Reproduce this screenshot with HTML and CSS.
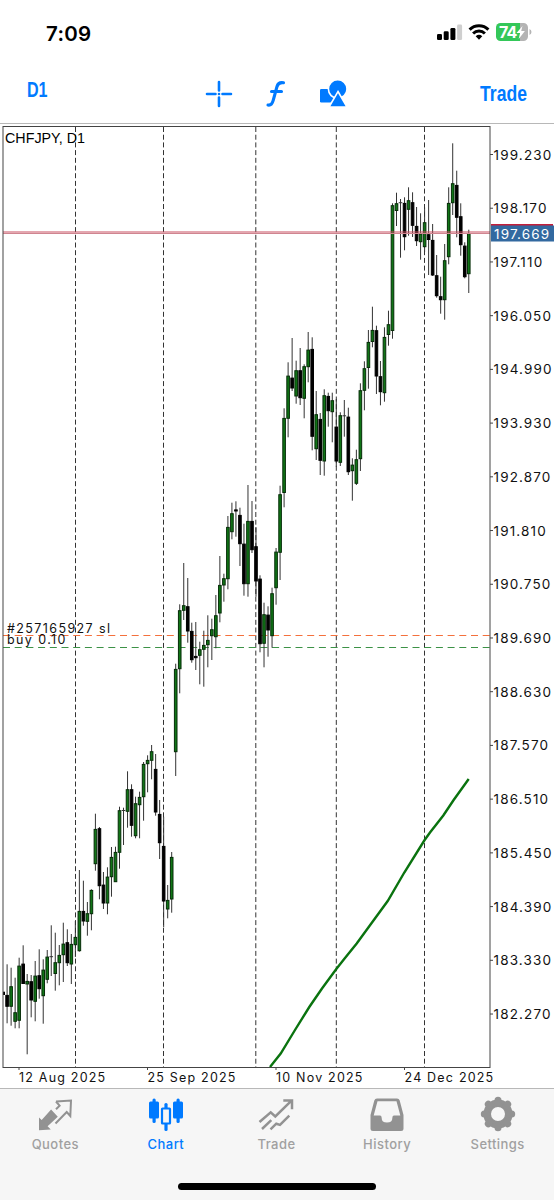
FILE: index.html
```html
<!DOCTYPE html>
<html lang="en">
<head>
  <meta charset="UTF-8" />
  <meta name="viewport" content="width=device-width, initial-scale=1.0" />
  <title>CHFJPY, D1</title>
  <link rel="stylesheet" href="styles.css">
</head>
<body>
  <div class="app">
    <header class="header">
      <div class="status">
        <span class="time">7:09</span>
        <svg class="status-icons" width="98" height="20" viewBox="0 0 98 20">
          <rect x="0" y="11" width="5" height="6" rx="1.3" />
          <rect x="6.7" y="8.3" width="5" height="8.7" rx="1.3" />
          <rect x="13.4" y="5" width="5" height="12" rx="1.3" />
          <rect x="20.1" y="1.6" width="5" height="15.4" rx="1.3" fill="#cfcfcf" />
          <g fill="none" stroke="#000" stroke-width="3">
            <path d="M32.6 6.6a13.3 13.3 0 0 1 18.8 0" />
            <path d="M36.1 10.5a8.4 8.4 0 0 1 11.8 0" />
          </g>
          <path d="M38.7 13.2a5 5 0 0 1 6.6 0L42 16.8z" />
          <path d="M63.5 0H83v18H63.500a4.500 4.500 0 0 1-4.500-4.500v-9A4.500 4.500 0 0 1 63.500 0z" fill="#34c759" />
          <path d="M83 0h3.500A4.500 4.500 0 0 1 91 4.500v9a4.500 4.500 0 0 1-4.500 4.500H83z" fill="#b4b4b4" />
          <path d="M92.500 6v6q2-1 2-3t-2-3z" fill="#b4b4b4" />
          <text class="battery" x="62" y="14.700">74</text>
          <path d="M85.500 3L79.500 10h3.600l-1.400 6 6.200-8h-3.700z" fill="#fff" />
        </svg>
      </div>
      <nav class="toolbar">
        <span class="period">D1</span>
        <div class="tools">
          <svg width="28" height="28" viewBox="0 0 28 28" stroke="#007aff" stroke-width="2.600" stroke-linecap="round">
            <path d="M14 2v8.500M14 17.500V26M2 14h8.500M17.500 14H26" /><circle cx="14" cy="14" r="1.300" fill="#007aff" stroke="none" />
          </svg>
          <svg width="20" height="28" viewBox="0 0 20 28" fill="none" stroke="#007aff" stroke-width="3.100" stroke-linecap="round">
            <path d="M2 25c3.200.6 4.300-1.300 5.200-4.600L11 6.500c.9-3.200 3-4.300 6.500-3.700M5.500 11.500h10" />
          </svg>
          <svg width="28" height="28" viewBox="0 0 28 28" fill="#007aff">
            <rect x="1" y="9" width="15" height="13.500" rx="1.200" />
            <circle cx="18.700" cy="9" r="9.300" stroke="#fff" stroke-width="1.600" />
            <path d="M19 11.500L28 27H10z" stroke="#fff" stroke-width="1.600" />
          </svg>
        </div>
        <span class="trade">Trade</span>
      </nav>
    </header>

    <svg class="chart" id="chart" width="554" height="964" viewBox="0 124 554 964">
      <g id="separators" class="separator"></g>
      <path class="sl-line" d="M3 635.500H490" />
      <path class="buy-line" d="M3 647.500H490" />
      <g id="candles"></g>
      <polyline class="average" points="270,1067 280.700,1053.500 295,1030 309.300,1007 322,988.500 336.300,969 345,958 356.700,943.500 372,922.500 387.700,901 404.300,872.500 424.300,840.500 430,832.500 443.300,815.500 453.300,800.500 468.700,779" />
      <path class="ask" d="M3 232H490" />
      <path class="bid" d="M3 233.500H490" />
      <rect class="frame" x="3" y="126.500" width="487" height="941" />
      <g id="prices" class="price"></g>
      <g id="dates" class="date"></g>
      <rect x="491" y="224" width="62" height="2" fill="#c41e3a" />
      <rect x="491" y="225.500" width="63" height="16" fill="#3269a0" />
      <text class="current" x="494" y="238.700">197.669</text>
      <text class="symbol" x="5" y="143">CHFJPY, D1</text>
      <text class="order" x="7" y="632.500">#257165927 sl</text>
      <text class="order" x="7" y="644">buy 0.10</text>
    </svg>

    <footer class="tabbar">
      <div class="tabs">
        <div class="tab">
          <svg width="36" height="34" viewBox="0 0 36 34">
            <path d="M2 20.500v12.800l11.800-.8-3.200-3.200 10.200-9.600-6.700-7.300L4.700 22.900z" fill="#929292" />
            <path d="M19 4.500L34 3.500 33.300 19l-3.600-4L18.500 26.500M19 4.500l3.600 4.200-3.600 3.500" fill="none" stroke="#929292" stroke-width="2" />
          </svg>
          <span>Quotes</span>
        </div>
        <div class="tab active">
          <svg width="36" height="34" viewBox="0 0 36 34" fill="#007aff">
            <rect x="1" y="4.500" width="10" height="17" rx="1.500" /><rect x="4.500" y="1.500" width="3.200" height="24.500" rx="1.500" />
            <rect x="25" y="4.500" width="10" height="17" rx="1.500" /><rect x="28.500" y="1.500" width="3.200" height="24.500" rx="1.500" />
            <rect x="16.400" y="6" width="3.200" height="28" rx="1.500" />
            <rect x="14" y="11.500" width="8" height="15" rx=".5" fill="#f6f6f6" stroke="#007aff" stroke-width="2.200" />
          </svg>
          <span>Chart</span>
        </div>
        <div class="tab">
          <svg width="36" height="34" viewBox="0 0 36 34" fill="none" stroke="#929292" stroke-width="2.500">
            <path d="M1.500 25L12.700 15.300l4.600 4.200L33 4.200M25.300 3.500H34v8.700M4 32l9.300-8.800M12.500 32.300l5.800-5.600 3.700 1.200 9.300-9.200" />
          </svg>
          <span>Trade</span>
        </div>
        <div class="tab">
          <svg width="36" height="34" viewBox="0 0 36 34" fill="#929292" fill-rule="evenodd">
            <path d="M8 1.500h20q2 0 2.700 2L34.500 18v13.500q0 2.500-2.500 2.500H4q-2.500 0-2.500-2.500V18L5.300 3.500q.7-2 2.700-2zM8.500 4.200L4.700 18.600H11q1.600 0 1.600 1.800 0 5.200 5.400 5.200t5.400-5.200q0-1.800 1.600-1.800h6.300L27.500 4.200z" />
          </svg>
          <span>History</span>
        </div>
        <div class="tab">
          <svg width="36" height="36" viewBox="0 0 36 36" fill="none" stroke="#929292">
            <circle cx="18" cy="18" r="10.800" stroke-width="7.600" />
            <g id="teeth" stroke-width="7" stroke-linecap="round"></g>
          </svg>
          <span>Settings</span>
        </div>
      </div>
      <div class="home"></div>
    </footer>
  </div>
  <script src="chart.js"></script>
</body>
</html>
```
FILE: styles.css
```css
* {
  box-sizing: border-box;
}
body {
  margin: 0;
  background-color: #fff;
  font-family: Inter, "Liberation Sans", sans-serif;
}
.app {
  display: flex;
  flex-direction: column;
  width: 554px;
  height: 1200px;
  overflow: hidden;
}
.header {
  height: 124px;
  border-bottom: 1px solid #b8b8b8;
}
.status {
  display: flex;
  justify-content: space-between;
  align-items: center;
  height: 66px;
  padding: 0 19px 0 46px;
}
.time {
  font-size: 20.5px;
  font-weight: 600;
  letter-spacing: 0.3px;
}
.battery {
  font-size: 16px;
  font-weight: 700;
  fill: #fff;
  letter-spacing: -0.8px;
}
.toolbar {
  display: flex;
  justify-content: space-between;
  align-items: center;
  height: 56px;
  padding: 0 27px;
  color: #007aff;
  font-family: "Liberation Sans", sans-serif;
  font-size: 22px;
  font-weight: bold;
}
.period {
  width: 60px;
  padding-bottom: 8px;
  transform: scaleX(0.73);
  transform-origin: left;
}
.tools {
  display: flex;
  gap: 33px;
  margin-right: 2px;
}
.trade {
  width: 60px;
  text-align: right;
  transform: scaleX(0.8);
  transform-origin: right;
}
.chart {
  display: block;
  flex: none;
}
.frame {
  fill: none;
  stroke: #444;
}
.separator {
  stroke: #333;
  stroke-dasharray: 5 2.7;
}
.sl-line {
  stroke: #f4703c;
  stroke-dasharray: 7 4.7;
}
.buy-line {
  stroke: #3c9246;
  stroke-dasharray: 7 4.7;
}
.average {
  fill: none;
  stroke: #0a730f;
  stroke-width: 2.4;
}
.ask {
  stroke: #c94f61;
}
.bid {
  stroke: #cf8590;
}
.wick {
  stroke: #333;
}
.bull {
  fill: #107516;
  stroke: #062c08;
}
.bear {
  fill: #000;
  stroke: #000;
}
.price,
.current {
  font-size: 13.5px;
  letter-spacing: 1.15px;
  fill: #111;
}
.current {
  fill: #fff;
}
.date {
  font-size: 12.5px;
  letter-spacing: 1.2px;
  fill: #111;
}
.tick {
  stroke: #444;
}
.symbol {
  font-family: "Liberation Sans", sans-serif;
  font-size: 14.3px;
}
.order {
  font-size: 12.5px;
  letter-spacing: 1.4px;
  fill: #111;
}
.tabbar {
  height: 112px;
  border-top: 1px solid #b8b8b8;
  background-color: #f6f6f6;
}
.tabs {
  display: flex;
  width: 553px;
  height: 94px;
  padding-top: 7px;
}
.tab {
  display: flex;
  flex: 1;
  flex-direction: column;
  align-items: center;
  color: #a0a0a0;
  font-size: 13px;
  font-weight: 500;
  letter-spacing: 0.45px;
}
.tab svg {
  height: 36px;
  margin-bottom: 4px;
}
.tab.active {
  color: #007aff;
}
.home {
  width: 198px;
  height: 7px;
  margin: 0 auto;
  border-radius: 4px;
  background-color: #000;
}
```
FILE: chart.js
```js
const NS = "http://www.w3.org/2000/svg";

// high, body top, body bottom, low, 1 = up / 0 = down
const candles = [
  [964.3, 995, 1006.3, 1023.3, 0], [967.7, 986.3, 1006.3, 1025.7, 1], [977.7, 1012.3, 1021.3, 1028.3, 1],
  [957.7, 965.7, 1020.3, 1028.3, 1], [945.3, 963.7, 983.5, 983.5, 0], [974, 981, 984, 1054.3, 1],
  [975, 981.3, 1000, 1017.3, 0], [961, 975.7, 1001.3, 1021.3, 1], [949.3, 975.3, 988.7, 998.7, 0],
  [959.3, 969.7, 995.7, 1023.7, 1], [950, 956.7, 979.3, 983.3, 1], [925.3, 956.2, 957, 976, 0],
  [932.7, 962.3, 973.5, 990.7, 1], [945, 955, 962.7, 985.3, 1], [922.7, 943.7, 954.7, 982, 1],
  [929.3, 942.3, 962.7, 966, 0], [934, 944, 964, 984, 1], [921, 937, 944.7, 957, 1],
  [870, 911, 950.7, 951.7, 1], [880.7, 911, 921, 925.7, 0], [902, 913.3, 921.3, 935.7, 1],
  [889.3, 890, 913.7, 930.3, 1], [813.7, 829, 863.7, 870.7, 1], [827, 828.3, 885.7, 899.3, 0],
  [872, 884.7, 903, 909, 0], [867.3, 876.7, 903, 914.3, 1], [847, 857, 876.7, 896.7, 1],
  [846.7, 852, 881.7, 881.7, 1], [806.7, 810.3, 852.3, 868.7, 1], [807.7, 810, 810.7, 845, 0],
  [771.3, 789.3, 811.3, 827.7, 1], [784.3, 789.3, 825.3, 836.7, 0], [796.7, 803.3, 835.7, 838.3, 1],
  [791.7, 797, 804.7, 838.3, 1], [762, 764, 796.7, 820.7, 1], [755.3, 760, 763.7, 792.3, 1],
  [745, 751.3, 760.3, 779.3, 1], [754, 769, 812, 815.7, 0], [800, 814, 842.7, 859, 0],
  [816.7, 846, 901, 927.3, 0], [885, 900, 909, 918.3, 1], [852, 857, 899, 912.7, 1],
  [663.7, 669, 751.7, 776, 1], [604.3, 610.3, 668.7, 693.3, 1], [563, 605.3, 610.3, 620, 1],
  [578, 606.3, 631, 642.7, 0], [622.7, 631, 659.7, 662.7, 0], [622, 656, 657.7, 670, 0],
  [641.7, 649.3, 655.3, 684.3, 1], [630.7, 645, 649.3, 686.7, 1], [615.3, 640, 644.7, 667.3, 1],
  [618.7, 629.3, 635.7, 660, 1], [595, 615.3, 636.7, 648.3, 1], [556, 585, 613, 622.3, 1],
  [573.7, 578.3, 585, 601.7, 1], [516, 527, 578.7, 589.3, 1], [502.7, 513.3, 531.7, 539.3, 1],
  [501.3, 509.5, 511, 536.7, 0], [507.7, 515, 543.7, 566, 0], [523.7, 543.7, 583.7, 595.7, 0],
  [485, 521, 583.7, 596.7, 1], [501, 521, 549.7, 553, 0], [527.3, 546.3, 581, 596.7, 0],
  [575.3, 578.7, 643.7, 652.3, 0], [602.7, 614.3, 643.3, 667.3, 1], [606.3, 614.7, 630, 656.7, 0],
  [587.7, 593.3, 635.7, 647.7, 1], [548, 551.7, 587.7, 604.7, 1], [485.7, 494.3, 552.3, 580, 1],
  [408.3, 418, 492.5, 507.3, 1], [362.3, 375.7, 418.3, 437.3, 1], [338, 377.7, 388, 391, 0],
  [360.7, 370.3, 396, 403.7, 1], [348, 370.3, 397.7, 405, 0], [364.3, 366.3, 398.3, 418.3, 1],
  [332, 349.7, 366.7, 382.3, 1], [337.3, 349, 436.3, 450.3, 0], [391, 414.3, 448.7, 460, 1],
  [413, 419, 460.3, 475, 0], [389.3, 395.3, 461, 475.7, 1], [392.7, 396, 410.7, 426.7, 0],
  [392.7, 400.3, 411.7, 442.3, 1], [399, 426.7, 461, 466.7, 0], [412.3, 415.3, 462.3, 466, 1],
  [400, 415.3, 416, 436.7, 0], [407.7, 416.7, 471.7, 475, 0], [458.3, 464.7, 470.7, 500.7, 1],
  [449.7, 459.3, 483.3, 485, 1], [383.3, 390.3, 458.7, 471, 1], [361.3, 368.3, 390.3, 410.3, 1],
  [330, 342, 367.5, 388.7, 1], [306.7, 330, 341.5, 347.3, 1], [325.7, 330.3, 376, 394, 0],
  [361, 376.3, 391.7, 405.3, 0], [327.3, 337, 392.7, 401.7, 1], [310.7, 324.3, 334.5, 345.7, 1],
  [203.3, 205.3, 330.5, 338.7, 1], [192.7, 203.3, 210.5, 226, 1], [199, 202.2, 203, 257.7, 0],
  [197.3, 203, 236.7, 250.3, 0], [187.3, 200.3, 209.3, 235.7, 1], [192.3, 202.3, 225.3, 237, 0],
  [207, 226, 240.7, 246, 0], [213.3, 233.7, 241.7, 259.7, 1], [207.3, 222.3, 246.7, 252, 1],
  [200, 234.3, 239.5, 275, 0], [224, 240, 275, 276, 0], [255, 275.3, 295.7, 297.7, 0],
  [276.7, 296.3, 299.7, 313.7, 0], [244, 260.3, 299.7, 319.7, 1], [187.3, 203, 256.7, 264.3, 1],
  [143.3, 183.3, 202.7, 215, 1], [170.7, 185, 217.3, 237.3, 0], [203.3, 216.3, 244.7, 255.7, 0],
  [242.3, 245.7, 276.7, 278.3, 0], [229.7, 233.3, 273.7, 293, 1]
];

function add(parent, name, attrs, text) {
  const el = document.createElementNS(NS, name);
  for (const key in attrs) el.setAttribute(key, attrs[key]);
  if (text) el.textContent = text;
  document.getElementById(parent).appendChild(el);
}

// the oldest bar is cut by the frame
add("candles", "rect", { x: 3, y: 991.7, width: 2, height: 3.3 });

candles.forEach(([high, top, bottom, low, up], i) => {
  const x = 7.1 + i * 4.0145;
  add("candles", "path", { class: "wick", d: `M${x} ${high}V${low}` });
  if (bottom - top < 1) {
    add("candles", "path", { class: "wick", d: `M${x - 1.8} ${top + 0.5}H${x + 1.8}` });
    return;
  }
  add("candles", "rect", {
    class: up ? "bull" : "bear",
    x: x - 1.3, y: top + 0.4, width: 2.6, height: bottom - top - 0.4
  });
});

[75.5, 163.5, 255.8, 336.3, 424.5].forEach(x => {
  add("separators", "path", { d: `M${x} 127V1067` });
});

// price scale, 1.06 per step
for (let i = 0; i < 17; i++) {
  const y = 154.5 + i * 53.72;
  add("prices", "path", { class: "tick", d: `M490 ${y}h3` });
  add("prices", "text", { x: 493.5, y: y + 5 }, (199.23 - i * 1.06).toFixed(3));
}

["12 Aug 2025", "25 Sep 2025", "10 Nov 2025", "24 Dec 2025"].forEach((label, i) => {
  const x = 19 + i * 128.5;
  add("dates", "path", { class: "tick", d: `M${x} 1067v3` });
  add("dates", "text", { x: x, y: 1082 }, label);
});

for (let i = 0; i < 8; i++) {
  const a = i * Math.PI / 4;
  add("teeth", "path", {
    d: `M${18 + 12 * Math.cos(a)} ${18 + 12 * Math.sin(a)}L${18 + 13.7 * Math.cos(a)} ${18 + 13.7 * Math.sin(a)}`
  });
}
```
